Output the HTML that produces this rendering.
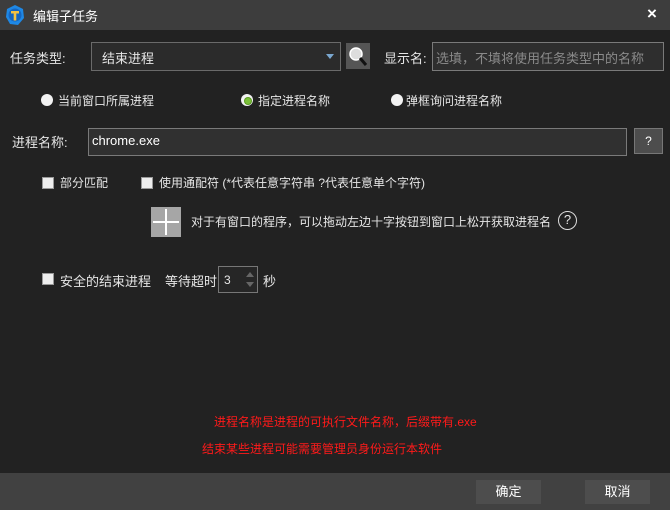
<!DOCTYPE html>
<html><head><meta charset="utf-8"><style>
*{margin:0;padding:0;box-sizing:border-box}
body{width:670px;height:510px;background:#222;font-family:"Liberation Sans","Noto Sans CJK SC",sans-serif;font-size:12px;color:#e6e6e6;position:relative;overflow:hidden}
.a{position:absolute;white-space:nowrap}
.tb{left:0;top:0;width:670px;height:30px;background:#3d3d3d}
.box{position:absolute;border:1px solid #6a6a6a;background:#2e2e2e}
.rad{position:absolute;width:12px;height:12px;border-radius:50%;background:#f2f2f2}
.chk{position:absolute;width:12px;height:12px;background:#eee;border:1px solid #999}
.btn{position:absolute;background:#4d4d4d;color:#fff;text-align:center;line-height:24px;font-size:13px}
.red{color:#ff1a1a}
</style></head><body>
<div class="a tb"></div>
<svg class="a" style="left:4px;top:4px" width="22" height="22" viewBox="0 0 22 22"><path d="M11 1 L19 5 L20 14 L14 21 L6 20 L2 13 L3 5Z" fill="#1e88e5"/><circle cx="11" cy="11" r="6.5" fill="#1565c0"/><path d="M7 7h8v2.5h-2.7v7h-2.6v-7H7z" fill="#f5c242"/></svg>
<div class="a" style="left:33px;top:6px;font-size:13px;color:#fff">编辑子任务</div>
<div class="a" style="left:647px;top:4px;font-size:17px;color:#fff;font-weight:bold">×</div>

<div class="a" style="left:10px;top:48px;font-size:13px">任务类型:</div>
<div class="box" style="left:91px;top:42px;width:250px;height:29px;background:#2b2b2b"></div>
<div class="a" style="left:102px;top:48px;font-size:13px">结束进程</div>
<div class="a" style="left:326px;top:54px;width:0;height:0;border-left:4px solid transparent;border-right:4px solid transparent;border-top:5px solid #7aa7d0"></div>
<div class="a" style="left:346px;top:43px;width:24px;height:26px;background:#555"></div>
<svg class="a" style="left:347px;top:44px" width="22" height="24"><circle cx="9" cy="10" r="6" fill="#ddd" stroke="#fff" stroke-width="1.5"/><path d="M13 14 L19 21" stroke="#111" stroke-width="3"/></svg>
<div class="a" style="left:384px;top:48px;font-size:13px">显示名:</div>
<div class="box" style="left:432px;top:42px;width:232px;height:29px;border-color:#7a7a7a"></div>
<div class="a" style="left:436px;top:48px;font-size:13px;color:#8a8a8a">选填，不填将使用任务类型中的名称</div>

<div class="rad" style="left:41px;top:94px"></div><div class="a" style="left:58px;top:92px">当前窗口所属进程</div>
<div class="rad" style="left:241px;top:94px"></div><div class="a" style="left:245px;top:98px;width:6px;height:6px;border-radius:50%;background:#7cc13a;box-shadow:0 0 0 1px #5a9a20"></div><div class="a" style="left:258px;top:92px">指定进程名称</div>
<div class="rad" style="left:391px;top:94px"></div><div class="a" style="left:406px;top:92px">弹框询问进程名称</div>

<div class="a" style="left:12px;top:132px;font-size:13px">进程名称:</div>
<div class="box" style="left:88px;top:128px;width:539px;height:28px;border-color:#7a7a7a;background:#303030"></div>
<div class="a" style="left:92px;top:133px;font-size:13px;color:#fff">chrome.exe</div>
<div class="btn" style="left:634px;top:128px;width:29px;height:26px;border:1px solid #777;line-height:24px;font-size:12px">?</div>

<div class="chk" style="left:42px;top:177px"></div><div class="a" style="left:60px;top:174px">部分匹配</div>
<div class="chk" style="left:141px;top:177px"></div><div class="a" style="left:159px;top:174px">使用通配符 (*代表任意字符串 ?代表任意单个字符)</div>

<div class="a" style="left:151px;top:207px;width:30px;height:30px;background:#a6a6a6"></div>
<div class="a" style="left:165px;top:209px;width:2px;height:26px;background:#fff"></div>
<div class="a" style="left:153px;top:221px;width:26px;height:2px;background:#fff"></div>
<div class="a" style="left:191px;top:213px">对于有窗口的程序，可以拖动左边十字按钮到窗口上松开获取进程名</div>
<div class="a" style="left:558px;top:211px;width:19px;height:19px;border:1.5px solid #ddd;border-radius:50%;text-align:center;line-height:16px;font-size:13px">?</div>

<div class="chk" style="left:42px;top:273px"></div><div class="a" style="left:60px;top:271px;font-size:13px">安全的结束进程</div>
<div class="a" style="left:165px;top:271px;font-size:13px">等待超时</div>
<div class="box" style="left:218px;top:266px;width:40px;height:27px;border-color:#777;background:#262626"></div>
<div class="a" style="left:224px;top:273px">3</div>
<div class="a" style="left:246px;top:272px;border-left:4px solid transparent;border-right:4px solid transparent;border-bottom:5px solid #666"></div>
<div class="a" style="left:246px;top:282px;border-left:4px solid transparent;border-right:4px solid transparent;border-top:5px solid #666"></div>
<div class="a" style="left:263px;top:271px;font-size:13px">秒</div>

<div class="a red" style="left:214px;top:413px">进程名称是进程的可执行文件名称，后缀带有.exe</div>
<div class="a red" style="left:202px;top:440px">结束某些进程可能需要管理员身份运行本软件</div>

<div class="a" style="left:0;top:473px;width:670px;height:37px;background:#414141"></div>
<div class="btn" style="left:476px;top:480px;width:65px;height:24px">确定</div>
<div class="btn" style="left:585px;top:480px;width:65px;height:24px">取消</div>
</body></html>
